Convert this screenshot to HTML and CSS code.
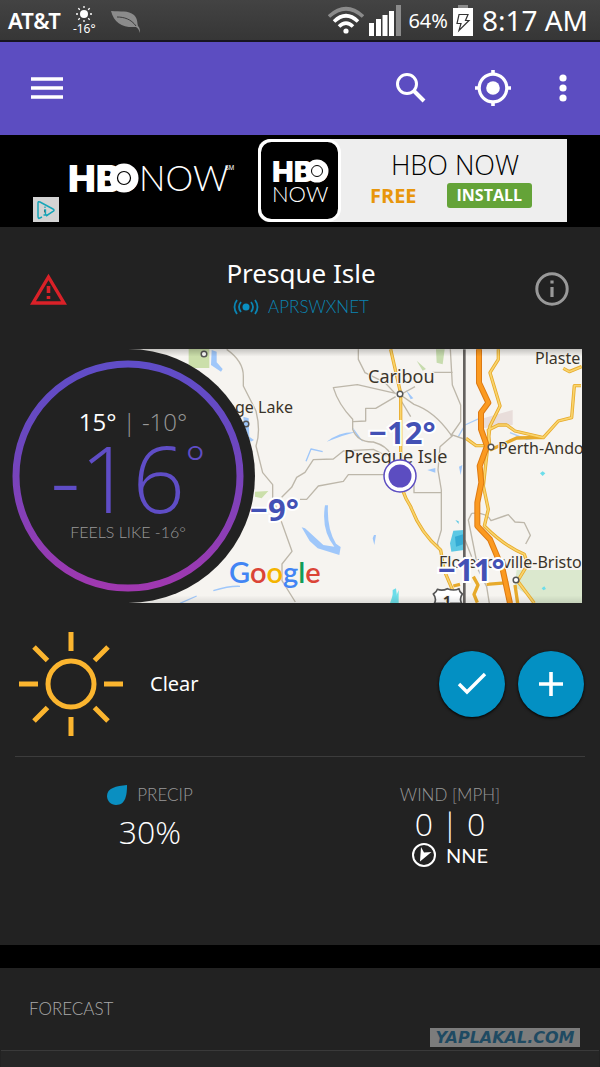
FILE: index.html
```html
<!DOCTYPE html>
<html lang="en">
<head>
    <meta charset="UTF-8">
    <meta name="viewport" content="width=device-width, initial-scale=1.0">
    <title>Presque Isle Weather</title>
    <link rel="stylesheet" href="styles.css">
</head>
<body>
    <div class="status-bar">
        <span class="carrier">AT&amp;T</span>
        <div class="status-weather">
            <svg width="18" height="18" viewBox="0 0 18 18">
                <circle cx="9" cy="9" r="4" fill="#fff"/>
                <path d="M9 1v2M9 15v2M1 9h2M15 9h2M3.3 3.3l1.5 1.5M13.2 13.2l1.5 1.5M3.3 14.7l1.5-1.5M13.2 4.8l1.5-1.5" stroke="#fff" stroke-width="1.3"/>
            </svg>
            <span>-16°</span>
        </div>
        <svg class="leaf" width="30" height="23" viewBox="0 0 30 23">
            <path d="M0 0c10 1 17-1 23 4 4 4 3 8 4 11 2 2 2 4 2 7-1-3-2-5-4-6C12 17 3 12 0 0z" fill="#8b8b8b"/>
            <path d="M6 6c7 0 14 2 19 9" fill="none" stroke="#3d3d3d"/>
        </svg>
        <div class="status-right">
            <svg width="36" height="28" viewBox="0 0 36 28">
                <g fill="none" stroke-width="3.6">
                    <path d="M1 10.500Q18-5 35 10.500" stroke="#8b8b8b"/>
                    <path d="M6 15.500Q18 4 30 15.500" stroke="#fff"/>
                    <path d="M11 20.500Q18 13.500 25 20.500" stroke="#fff"/>
                </g>
                <circle cx="18" cy="25" r="2.600" fill="#fff"/>
            </svg>
            <svg width="32" height="31" viewBox="0 0 32 31">
                <path d="M0 18h5v13H0zM7 14h5v17H7zM13.500 10h5v21h-5zM20 6h5v25h-5z" fill="#fff"/>
                <path d="M27 0h5v31h-5z" fill="#8b8b8b"/>
            </svg>
            <span class="battery-level">64%</span>
            <svg width="20" height="31" viewBox="0 0 20 31">
                <path d="M5 0h10v4H5z" fill="#8b8b8b"/>
                <path d="M0 3h20v28H0z" fill="#fff"/>
                <path d="M6 9.500h9l-2.500 6H16L6 25.500l2-7H4z" fill="none" stroke="#333" stroke-width="1.200"/>
            </svg>
            <span class="clock">8:17 AM</span>
        </div>
    </div>

    <header class="toolbar">
        <button type="button" class="icon-button" aria-label="Menu">
            <svg width="32" height="24" viewBox="0 0 32 24"><path d="M0 3h32M0 12h32M0 21h32" stroke="#fff" stroke-width="3.600"/></svg>
        </button>
        <div class="toolbar-actions">
            <button type="button" class="icon-button" aria-label="Search">
                <svg width="32" height="32" viewBox="0 0 32 32" fill="none" stroke="#fff">
                    <circle cx="12" cy="12" r="9.500" stroke-width="3"/>
                    <path d="M19 19l10 10" stroke-width="4"/>
                </svg>
            </button>
            <button type="button" class="icon-button" aria-label="My location">
                <svg width="38" height="38" viewBox="0 0 38 38" fill="none" stroke="#fff">
                    <circle cx="19" cy="19" r="13.800" stroke-width="3.200"/>
                    <circle cx="19" cy="19" r="6.800" fill="#fff" stroke="none"/>
                    <path d="M19 1v5M19 32v5M1 19h5M32 19h5" stroke-width="3.600"/>
                </svg>
            </button>
            <button type="button" class="icon-button" aria-label="More options">
                <svg width="8" height="28" viewBox="0 0 8 28" fill="#fff">
                    <circle cx="4" cy="4" r="3.600"/><circle cx="4" cy="14" r="3.600"/><circle cx="4" cy="24" r="3.600"/>
                </svg>
            </button>
        </div>
    </header>

    <aside class="ad">
        <svg class="ad-choices" width="26" height="25" viewBox="0 0 26 25">
            <path d="M0 0h26v25H0z" fill="#d3d3d3"/>
            <path d="M9 20l-3 1.500q-1-.5-1-2V6q0-2 2-1l13 7q2 1 0 2.500L13 19" fill="none" stroke="#16a5b8" stroke-width="1.500"/>
            <path d="M12 9.500v1.500M11 13h1.500v5M10.500 18h4" stroke="#16a5b8" stroke-width="1.300"/>
        </svg>
        <svg class="ad-logo" width="168" height="34" viewBox="0 0 168 34">
            <text x="-1" y="31" class="hbo-large">HB<tspan x="41">O</tspan></text>
            <circle cx="55" cy="17" r="14.500" fill="#fff"/>
            <circle cx="55" cy="17" r="6.500" fill="none" stroke="#000" stroke-width="1.200"/>
            <text x="70" y="30" class="now-large">NOW</text>
            <text x="156" y="9" class="service-mark">SM</text>
        </svg>
        <a href="#" class="ad-card">
            <svg class="ad-app" width="83" height="83" viewBox="0 0 83 83">
                <rect x="1.500" y="1.500" width="80" height="80" rx="12" fill="#000" stroke="#fff" stroke-width="3"/>
                <text x="14" y="43" class="hbo-small">HB<tspan x="48">O</tspan></text>
                <circle cx="59" cy="32" r="11.500" fill="#fff"/>
                <circle cx="59" cy="32" r="5.500" fill="none" stroke="#000"/>
                <text x="14" y="63" class="now-small">NOW</text>
            </svg>
            <span class="ad-copy">
                <span class="ad-title">HBO NOW</span>
                <span class="ad-row">
                    <span class="ad-price">FREE</span>
                    <span class="ad-install">INSTALL</span>
                </span>
            </span>
        </a>
    </aside>

    <main>
        <section class="location">
            <button type="button" class="icon-button" aria-label="Weather alert">
                <svg width="37" height="32" viewBox="0 0 37 32">
                    <path d="M18.500 4L34 30H3z" fill="none" stroke="#da2128" stroke-width="3.400"/>
                    <path d="M18.500 13v7M18.500 23v3" stroke="#da2128" stroke-width="3.600"/>
                </svg>
            </button>
            <div class="location-name">
                <h1>Presque Isle</h1>
                <a href="#" class="station">
                    <svg width="26" height="16" viewBox="0 0 26 16" fill="none" stroke="#0a85b3" stroke-width="1.800">
                        <circle cx="13" cy="8" r="3.500" fill="#0a8fc1" stroke="none"/>
                        <path d="M4 1Q-1 8 4 15M8 3Q4 8 8 13M18 3q4 5 0 10M22 1q5 7 0 14"/>
                    </svg>
                    APRSWXNET
                </a>
            </div>
            <button type="button" class="icon-button" aria-label="Station information">
                <svg width="34" height="34" viewBox="0 0 34 34" fill="none" stroke="#999">
                    <circle cx="17" cy="17" r="15.200" stroke-width="3"/>
                    <path d="M17 8.500v3M17 15v10" stroke-width="3.200"/>
                </svg>
            </button>
        </section>

        <section class="overview">
            <svg class="map" viewBox="0 0 582 254" preserveAspectRatio="xMaxYMid slice">
                <defs>
                    <linearGradient id="edge" x2="0" y2="1">
                        <stop offset="0" stop-color="#000" stop-opacity=".2"/>
                        <stop offset=".03" stop-color="#000" stop-opacity="0"/>
                        <stop offset=".97" stop-color="#000" stop-opacity="0"/>
                        <stop offset="1" stop-color="#000" stop-opacity=".1"/>
                    </linearGradient>
                </defs>
                <path d="M0 0h582v254H0z" fill="#f6f4f0"/>

                <!-- western half -->
                <g transform="translate(200 -9) scale(.33333)" fill="none" stroke-linejoin="round">
                    <path d="M-34 20h62v64h-62zM165 455l40-2-20 22-20-5z" fill="#cbdfaa"/>
                    <path d="M35 30l15 5v32l18 20-5 8-30-20zM130 230l16 5 2 55 14 10-10 5-20-50zM380 305q40-30 85-28-40 10-85 28zM305 562l10 3 55 50 33 5q-40-50-28-124h9q-4 70 24 115l14 10-4 24-65-20-24-22zM522 585l6 0-5 30-5-20zM458 262q10 30 32 44" fill="#9fc7fa"/>
                    <path d="M318 364l15-37 35 8M40 752q50-15 80-13M-60 790l50-22" stroke="#9fc7fa" stroke-width="4"/>
                    <path d="M80 28q50 35 50 80v30l38 75q15 60 0 105l20 80 30 36v40l15 40 43 120-30 38v50l40 64M245 472l30-30 15-30 25-15 25-38 60-2 30-24 90-5 40 20M300 478h20l35-40 75-14 15-20h110M587 160l-115-26-72 9q15 50 58 95v30q15 40 62 38 40 12 50 35M587 170l-60 35h-30v38l-38 2M475 28v30l20 40 60 30 32 34" stroke="#bdb7aa" stroke-width="4"/>
                    <path d="M570 790l10-30 6 15 10-25v40z" fill="#70e2e4"/>
                </g>

                <!-- eastern half -->
                <g transform="translate(390 -9) scale(.33333)" fill="none" stroke-linejoin="round">
                    <path d="M138 28h26l-6 45-18-5zM80 62l28 25-10 5z" fill="#c7dcae"/>
                    <path d="M380 690h197v100H440q-30-30-67-50z" fill="#dbe8ce"/>
                    <path d="M280 235l88-25v45l-90 10z" fill="#e8ddda"/>
                    <path d="M48 150l22 25-8 3zM112 390l24-6v14zM207 380l10-5-5 30z" fill="#9fc7fa"/>
                    <path d="M205 290l20-35 55-25M360 278l50 20 30-4" stroke="#aacdf8" stroke-width="4"/>
                    <path d="M32 165l40 28q60 20 110 90l40 14M32 180l30 50M182 288l30-43v-50l-25-60-6-107M128 97h60M150 320l40-35M150 320l-6 70 10 60v120l-12 40 8 25M72 400v58h82M75 140l-40 22M225 600l20 50M245 520l-10 20 30 150 25 50 8 50M245 520q45-4 58 22l40-14 12-4 20 22 28 2 18 38-14 26" stroke="#bdb7aa" stroke-width="4"/>
                    <g stroke="#e7aa2b" stroke-width="10">
                        <path d="M2 28l30 132 0 210q-10 70 30 130 30 80 90 130l10 60 30 70"/>
                        <path d="M325 28l0 30-25 40 30 100-30 60-20 180 15 70-12 50q60 60 120 85l10 30-30 50 50 67M228 295l30 22h34M300 330l-5-60 30-15h25l25 18 85 20 45-50 40-10 8-96h20M520 85l18 10 37-15M300 330l80-36 76-2M190 738l20-5M290 733l65-5M250 710l14 25-12 28 10 25M375 735l8 55"/>
                    </g>
                    <g stroke="#f9d46d" stroke-width="5">
                        <path d="M2 28l30 132 0 210q-10 70 30 130 30 80 90 130l10 60 30 70"/>
                        <path d="M325 28l0 30-25 40 30 100-30 60-20 180 15 70-12 50q60 60 120 85l10 30-30 50 50 67M228 295l30 22h34M300 330l-5-60 30-15h25l25 18 85 20 45-50 40-10 8-96h20M520 85l18 10 37-15"/>
                    </g>
                    <path d="M267 28v100l28 60-22 30v50l18 50-22 60 5 50-12 60 0 70 38 40 38 90 22 102" stroke="#dd7a13" stroke-width="18"/>
                    <path d="M267 28v100l28 60-22 30v50l18 50-22 60 5 50-12 60 0 70 38 40 38 90 22 102" stroke="#fb9a20" stroke-width="12"/>
                    <path d="M190 572l32-2v60l-38 5-4-25zM196 540l10 4v8z" fill="#5cc8e4"/>
                    <path d="M195 590l27-8v30l-24 8z" fill="#35abd4"/>
                    <path d="M223 28v762" stroke="#65625f" stroke-width="8"/>
                    <path d="M450 400l8-6 8 6-8 8zM455 745l8-6 5 8-8 4zM8 750l10-5 5 40-15 5z" fill="#6cddea"/>
                    <path d="M130 762q10-6 12-14 15 6 30-2 20 8 35 0 0 8 10 16-10 15-2 28h-82q8-14-3-28z" fill="#fff" stroke="#555" stroke-width="5"/>
                </g>

                <g fill="#fff" stroke="#555" stroke-width="1.500">
                    <circle cx="204" cy="5" r="2.800"/>
                    <circle cx="246" cy="75" r="2.800" fill="none"/>
                    <circle cx="400" cy="45" r="2.800"/>
                    <circle cx="491" cy="98" r="2.800"/>
                    <circle cx="516" cy="231" r="2.800"/>
                </g>

                <g class="place">
                    <text x="235" y="64">ge Lake</text>
                    <text x="368" y="34" class="town">Caribou</text>
                    <text x="344" y="114" class="town">Presque Isle</text>
                    <text x="535" y="15">Plaste</text>
                    <text x="498" y="105">Perth-Ando</text>
                    <text x="439" y="219">Florenceville-Bristo</text>
                    <text x="443" y="257" class="route">1</text>
                </g>
                <circle cx="400" cy="127" r="16" fill="#fff" stroke="#5c4dc1" stroke-width="1.500"/>
                <circle cx="400" cy="127" r="11.500" fill="#5c4dc1"/>
                <g class="reading">
                    <text x="369" y="95">−12°</text>
                    <text x="250" y="172">−9°</text>
                    <text x="438" y="232">−11°</text>
                </g>
                <text x="229" y="234" class="google"><tspan fill="#4285f4">G</tspan><tspan fill="#db4437">o</tspan><tspan fill="#f4b400">o</tspan><tspan fill="#4285f4">g</tspan><tspan fill="#0f9d58">l</tspan><tspan fill="#db4437">e</tspan></text>
                <path d="M0 0h582v254H0z" fill="url(#edge)"/>
            </svg>

            <div class="dial">
                <svg class="ring" viewBox="0 0 232 232">
                    <defs>
                        <linearGradient id="ring" x2="0" y2="1">
                            <stop offset="0" stop-color="#604dc8"/>
                            <stop offset=".3" stop-color="#6848c0"/>
                            <stop offset="1" stop-color="#a038b0"/>
                        </linearGradient>
                    </defs>
                    <circle cx="116" cy="116" r="112" fill="none" stroke="url(#ring)" stroke-width="7"/>
                </svg>
                <div class="dial-text">
                    <div class="range">15° <span>| -10°</span></div>
                    <div class="temperature">-16<span>°</span></div>
                    <div class="feels-like">FEELS LIKE -16°</div>
                </div>
            </div>
        </section>

        <section class="conditions">
            <svg width="104" height="104" viewBox="0 0 104 104" fill="none" stroke="#fbb52f">
                <circle cx="52" cy="52" r="23" stroke-width="5"/>
                <path d="M52 0v19M52 85v19M0 52h19M85 52h19M15 15l13.500 13.500M75.500 75.500L89 89M15 89l13.500-13.500M75.500 28.500L89 15" stroke-width="5"/>
            </svg>
            <p>Clear</p>
            <div class="report-buttons">
                <button type="button" class="round-button" aria-label="Confirm conditions">
                    <svg width="30" height="24" viewBox="0 0 30 24"><path d="M2 12l8 8L28 2" fill="none" stroke="#fff" stroke-width="3.400"/></svg>
                </button>
                <button type="button" class="round-button" aria-label="Add report">
                    <svg width="24" height="24" viewBox="0 0 24 24"><path d="M12 0v24M0 12h24" stroke="#fff" stroke-width="3.600"/></svg>
                </button>
            </div>
        </section>

        <section class="stats">
            <div class="stat">
                <h2>
                    <svg width="20" height="20" viewBox="0 0 20 20"><path d="M20 0c0 9-1 20-11 20C4 20 0 16 0 11 0 3 9 1 20 0z" fill="#0a8fc1"/></svg>
                    PRECIP
                </h2>
                <p class="stat-value precip-value">30%</p>
            </div>
            <div class="stat">
                <h2>WIND [MPH]</h2>
                <p class="stat-value">0 | 0</p>
                <p class="direction">
                    <svg width="24" height="24" viewBox="0 0 24 24">
                        <circle cx="12" cy="12" r="11" fill="none" stroke="#fff" stroke-width="2"/>
                        <path d="M9 4l3 5.500 7.500-.5L8 18.500z" fill="#fff"/>
                    </svg>
                    NNE
                </p>
            </div>
        </section>

        <section class="forecast">
            <h2>FORECAST</h2>
            <div class="forecast-panel"></div>
        </section>
    </main>

    <div class="watermark">YAPLAKAL.COM</div>
</body>
</html>
```

FILE: styles.css
```css
* {
    box-sizing: border-box;
}

body {
    display: flex;
    flex-direction: column;
    min-height: 100vh;
    margin: 0;
    position: relative;
    background-color: #222;
    color: #fff;
    font-family: Lato, sans-serif;
}

h1, h2, p {
    margin: 0;
    font-weight: 300;
}

svg {
    display: block;
    flex: none;
}

a {
    text-decoration: none;
}

.icon-button {
    padding: 0;
    border: none;
    background: none;
    cursor: pointer;
}

/* status bar */
.status-bar {
    display: flex;
    align-items: center;
    height: 42px;
    padding: 0 12px 0 8px;
    border-bottom: 2px solid #17151f;
    background: linear-gradient(#434343, #363636);
    font-family: "Noto Sans", sans-serif;
}

.carrier {
    font-size: 22px;
    font-weight: 600;
}

.status-weather {
    display: flex;
    flex-direction: column;
    align-items: center;
    margin-left: 12px;
    font-size: 12px;
    line-height: 12px;
}

.leaf {
    margin: 4px 0 0 15px;
}

.status-right {
    display: flex;
    align-items: center;
    gap: 5px;
    margin-left: auto;
}

.battery-level {
    margin-left: 2px;
    font-size: 20px;
}

.clock {
    margin-left: 4px;
    font-size: 28px;
}

/* toolbar */
.toolbar {
    display: flex;
    align-items: center;
    justify-content: space-between;
    height: 93px;
    padding: 0 33px 2px 31px;
    background-color: #5c4dc1;
}

.toolbar-actions {
    display: flex;
    align-items: center;
    gap: 47px;
}

/* ad */
.ad {
    display: flex;
    align-items: center;
    height: 92px;
    padding: 0 33px;
    background-color: #000;
    font-family: "Open Sans", sans-serif;
}

.ad-choices {
    align-self: flex-end;
    margin-bottom: 5px;
}

.ad-logo {
    margin: 0 auto 6px 10px;
    overflow: visible;
    fill: #fff;
}

.ad-app text {
    fill: #fff;
}

.hbo-large {
    font: 900 37px Inter, sans-serif;
}

.now-large {
    font: 300 35px Lato, sans-serif;
}

.service-mark {
    font: 6px Inter, sans-serif;
}

.hbo-small {
    font: 900 29px Inter, sans-serif;
}

.now-small {
    font: 300 22px Lato, sans-serif;
}

.ad-card {
    display: flex;
    flex: 0 1 309px;
    height: 83px;
    margin-bottom: 2px;
    border-radius: 12px 0 0 12px;
    background-color: #eee;
    color: #000;
}

.ad-copy {
    display: flex;
    flex: 1;
    flex-direction: column;
    align-items: center;
    padding: 8px 0 0 2px;
}

.ad-title {
    font-size: 27px;
    font-weight: 300;
    line-height: 36px;
}

.ad-row {
    display: flex;
    align-items: center;
    gap: 30px;
    margin-right: 8px;
}

.ad-price {
    color: #e8960c;
    font-size: 20px;
    font-weight: 700;
    line-height: 26px;
}

.ad-install {
    padding: 0 10px;
    border-radius: 3px;
    background-color: #64a338;
    color: #fff;
    font-size: 16px;
    font-weight: 700;
    line-height: 25px;
}

/* location */
.location {
    display: flex;
    align-items: center;
    justify-content: space-between;
    height: 122px;
    padding: 2px 31px 0 30px;
}

.location-name {
    display: flex;
    flex-direction: column;
    align-items: center;
}

.location-name h1 {
    font-family: "Noto Sans", sans-serif;
    font-size: 26px;
    font-weight: 400;
    line-height: 36px;
}

.station {
    display: flex;
    align-items: center;
    gap: 9px;
    color: #0a85b3;
    font-size: 17px;
    font-weight: 300;
    line-height: 32px;
}

/* map and temperature dial share one grid cell */
.overview {
    display: grid;
    align-items: center;
    margin-right: 18px;
    overflow: hidden;
}

.map {
    grid-area: 1 / 1;
    width: 100%;
    height: 254px;
}

.dial {
    display: grid;
    grid-area: 1 / 1;
    align-items: center;
    justify-self: start;
    width: 255px;
    height: 254px;
    padding-left: 12px;
    border-radius: 0 127px 127px 0;
    background-color: #222;
}

.ring {
    grid-area: 1 / 1;
    width: 232px;
}

.dial-text {
    grid-area: 1 / 1;
    width: 232px;
    text-align: center;
}

.range {
    margin-left: 10px;
    font-family: "Open Sans", sans-serif;
    font-size: 24px;
    line-height: 28px;
}

.range span {
    color: #999;
    font-weight: 300;
}

.temperature {
    display: flex;
    justify-content: center;
    color: #5f4dc6;
    font-family: "Open Sans", sans-serif;
    font-size: 92px;
    font-weight: 300;
    line-height: 84px;
}

.temperature span {
    font-size: 48px;
    line-height: 54px;
}

.feels-like {
    color: #999;
    font-size: 16px;
    font-weight: 300;
    line-height: 24px;
}

.place {
    fill: #3b342a;
    stroke: #f6f4f0;
    stroke-width: 2px;
    paint-order: stroke;
    font: 16px "Noto Sans", sans-serif;
}

.place .town {
    font-size: 18px;
}

.place .route {
    font-size: 14px;
    font-weight: 700;
}

.reading {
    fill: #4351b5;
    stroke: #fff;
    stroke-width: 4px;
    paint-order: stroke;
    font: 700 31px "Noto Sans", sans-serif;
}

.google {
    font: 600 29px Lato, sans-serif;
}

/* conditions */
.conditions {
    display: flex;
    align-items: center;
    height: 154px;
    margin: 0 15px;
    padding: 8px 1px 0 4px;
    border-bottom: 1px solid #3c3c3c;
}

.conditions p {
    margin-left: 27px;
    font-family: "Noto Sans", sans-serif;
    font-size: 20px;
    font-weight: 400;
}

.report-buttons {
    display: flex;
    gap: 13px;
    margin-left: auto;
}

.round-button {
    display: grid;
    place-items: center;
    width: 66px;
    height: 66px;
    padding: 0;
    border: none;
    border-radius: 50%;
    background-color: #0390c3;
    box-shadow: 0 1px 3px #000;
    cursor: pointer;
}

/* precipitation and wind */
.stats {
    display: grid;
    grid-template-columns: 1fr 1fr;
    min-height: 188px;
    padding-top: 26px;
}

.stat {
    display: flex;
    flex-direction: column;
    align-items: center;
}

.stat h2 {
    display: flex;
    align-items: center;
    gap: 10px;
    color: #999;
    font-size: 17px;
    line-height: 24px;
}

.stat-value {
    font-family: "Open Sans", sans-serif;
    font-size: 32px;
    line-height: 34px;
}

.precip-value {
    line-height: 50px;
}

.direction {
    display: flex;
    align-items: center;
    gap: 10px;
    font-size: 20px;
    font-weight: 400;
    line-height: 28px;
}

/* forecast */
main {
    display: flex;
    flex: 1;
    flex-direction: column;
}

.forecast {
    display: flex;
    flex: 1;
    flex-direction: column;
    border-top: 23px solid #000;
}

.forecast h2 {
    padding: 0 29px;
    color: #aaa;
    font-size: 17px;
    line-height: 82px;
}

.forecast-panel {
    flex: 1;
    margin: 0 1px;
    border-top: 1px solid #3a3a3a;
    background-color: #262626;
}

.watermark {
    position: absolute;
    right: 20px;
    bottom: 20px;
    width: 150px;
    background-color: #7c7c7c;
    color: #1f4a62;
    font: italic 900 16px/19px "DejaVu Sans", sans-serif;
    text-align: center;
}
```
